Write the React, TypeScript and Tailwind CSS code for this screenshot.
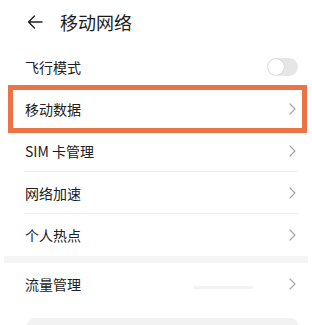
import React from 'react';

/* Mobile network settings list with an annotation box over "移动数据" */

function Chevron() {
  return (
    <svg width="7" height="12" viewBox="0 0 7 12" fill="none" className="shrink-0">
      <path d="M1 1l5 5-5 5" stroke="#a8a8a8" strokeWidth="1.2" strokeLinecap="round" strokeLinejoin="round" />
    </svg>
  );
}

function Toggle() {
  return (
    <div className="w-[31px] h-[18px] rounded-full bg-[#e6e6e6] flex items-center p-[1px]">
      <div className="w-[16px] h-[16px] rounded-full bg-white shadow-[0_0_1px_rgba(0,0,0,0.25)]" />
    </div>
  );
}

interface RowProps {
  label: string;
  right?: React.ReactNode;
  divider?: boolean;
  extra?: React.ReactNode;
}

function Row({ label, right, divider = true, extra }: RowProps) {
  return (
    <div
      className={`h-[42px] ml-[25px] mr-[14px] flex items-center justify-between ${
        divider ? 'border-b border-[#ededed]' : ''
      }`}
    >
      <span className="text-[14px] text-[#202020] leading-none">{label}</span>
      <div className="flex items-center gap-[36px]">
        {extra}
        <div className="pr-[2px]">{right ?? <Chevron />}</div>
      </div>
    </div>
  );
}

export default function App() {
  return (
    <div
      className="relative w-[312px] h-[325px] overflow-hidden bg-white"
      style={{ fontFamily: '"Noto Sans CJK SC", "Noto Sans", sans-serif' }}
    >
      {/* Header */}
      <div className="h-[44px] flex items-center pl-[27px]">
        <svg width="16" height="14" viewBox="0 0 16 14" fill="none">
          <path d="M15 7H1.5M7.5 1L1.5 7l6 6" stroke="#222" strokeWidth="1.4" strokeLinecap="round" strokeLinejoin="round" />
        </svg>
        <span className="ml-[17px] text-[18px] text-[#1c1c1c] leading-none">移动网络</span>
      </div>

      <div className="h-[2px]" />

      {/* Rows */}
      <Row label="飞行模式" right={<div className="-mr-[2px]"><Toggle /></div>} />
      <Row label="移动数据" />
      <Row label="SIM 卡管理" />
      <Row label="网络加速" />
      <Row label="个人热点" divider={false} />

      {/* Section gap */}
      <div className="h-[7px] mx-[4px] bg-[#f5f5f5]" />

      <Row
        label="流量管理"
        divider={false}
        extra={<div className="w-[60px] h-[3px] rounded-full bg-[#f3f3f3] mt-[6px]" />}
      />

      {/* Bottom card */}
      <div className="mt-[13px] ml-[27px] mr-[14px] h-[40px] rounded-t-[8px] bg-[#f2f2f2]" />

      {/* Annotation box */}
      <div className="absolute left-[8px] top-[85px] w-[299px] h-[48px] border-[5px] border-[#eb7447]" />
    </div>
  );
}
